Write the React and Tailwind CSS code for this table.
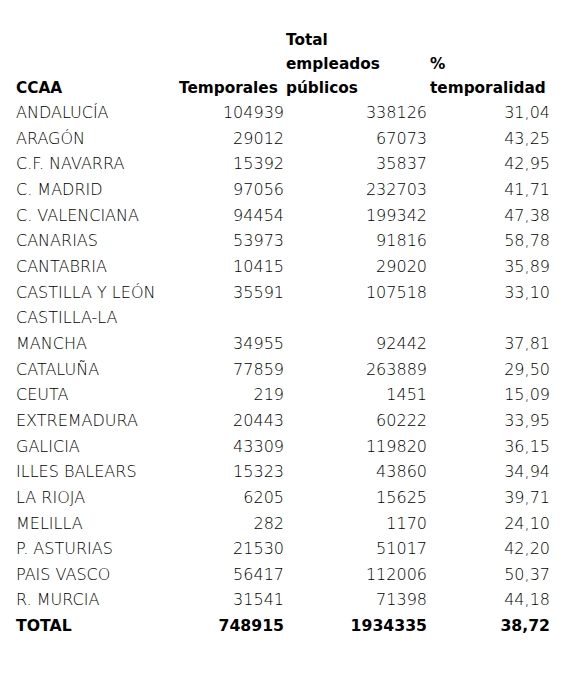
import React from "react";

const rows = [
  ["ANDALUCÍA", "104939", "338126", "31,04"],
  ["ARAGÓN", "29012", "67073", "43,25"],
  ["C.F. NAVARRA", "15392", "35837", "42,95"],
  ["C. MADRID", "97056", "232703", "41,71"],
  ["C. VALENCIANA", "94454", "199342", "47,38"],
  ["CANARIAS", "53973", "91816", "58,78"],
  ["CANTABRIA", "10415", "29020", "35,89"],
  ["CASTILLA Y LEÓN", "35591", "107518", "33,10"],
  ["CASTILLA-LA MANCHA", "34955", "92442", "37,81"],
  ["CATALUÑA", "77859", "263889", "29,50"],
  ["CEUTA", "219", "1451", "15,09"],
  ["EXTREMADURA", "20443", "60222", "33,95"],
  ["GALICIA", "43309", "119820", "36,15"],
  ["ILLES BALEARS", "15323", "43860", "34,94"],
  ["LA RIOJA", "6205", "15625", "39,71"],
  ["MELILLA", "282", "1170", "24,10"],
  ["P. ASTURIAS", "21530", "51017", "42,20"],
  ["PAIS VASCO", "56417", "112006", "50,37"],
  ["R. MURCIA", "31541", "71398", "44,18"],
];

const App = () => {
  return (
    <div className="min-h-screen bg-white pt-[28px] pl-[16px] font-['DejaVu_Sans',sans-serif] text-[16px] leading-[25.65px] text-black">
      <table className="border-collapse table-fixed w-[535px]">
        <colgroup>
          <col className="w-[163px]" />
          <col className="w-[107px]" />
          <col className="w-[144px]" />
          <col className="w-[121px]" />
        </colgroup>
        <thead>
          <tr className="font-bold align-bottom text-left text-[15.3px] leading-[24px]">
            <th className="p-0">CCAA</th>
            <th className="p-0">Temporales</th>
            <th className="p-0 pr-4">Total empleados públicos</th>
            <th className="p-0">% temporalidad</th>
          </tr>
        </thead>
        <tbody className="font-extralight">
          {rows.map((r) => (
            <tr key={r[0]} className="align-bottom">
              <td className="p-0 pr-2">{r[0]}</td>
              <td className="p-0 pr-[2px] text-right">{r[1]}</td>
              <td className="p-0 pr-[3px] text-right">{r[2]}</td>
              <td className="p-0 pr-[1px] text-right">{r[3]}</td>
            </tr>
          ))}
          <tr className="font-bold align-bottom text-[15.7px]">
            <td className="p-0">TOTAL</td>
            <td className="p-0 pr-[2px] text-right">748915</td>
            <td className="p-0 pr-[3px] text-right">1934335</td>
            <td className="p-0 pr-[1px] text-right">38,72</td>
          </tr>
        </tbody>
      </table>
    </div>
  );
};

export default App;
